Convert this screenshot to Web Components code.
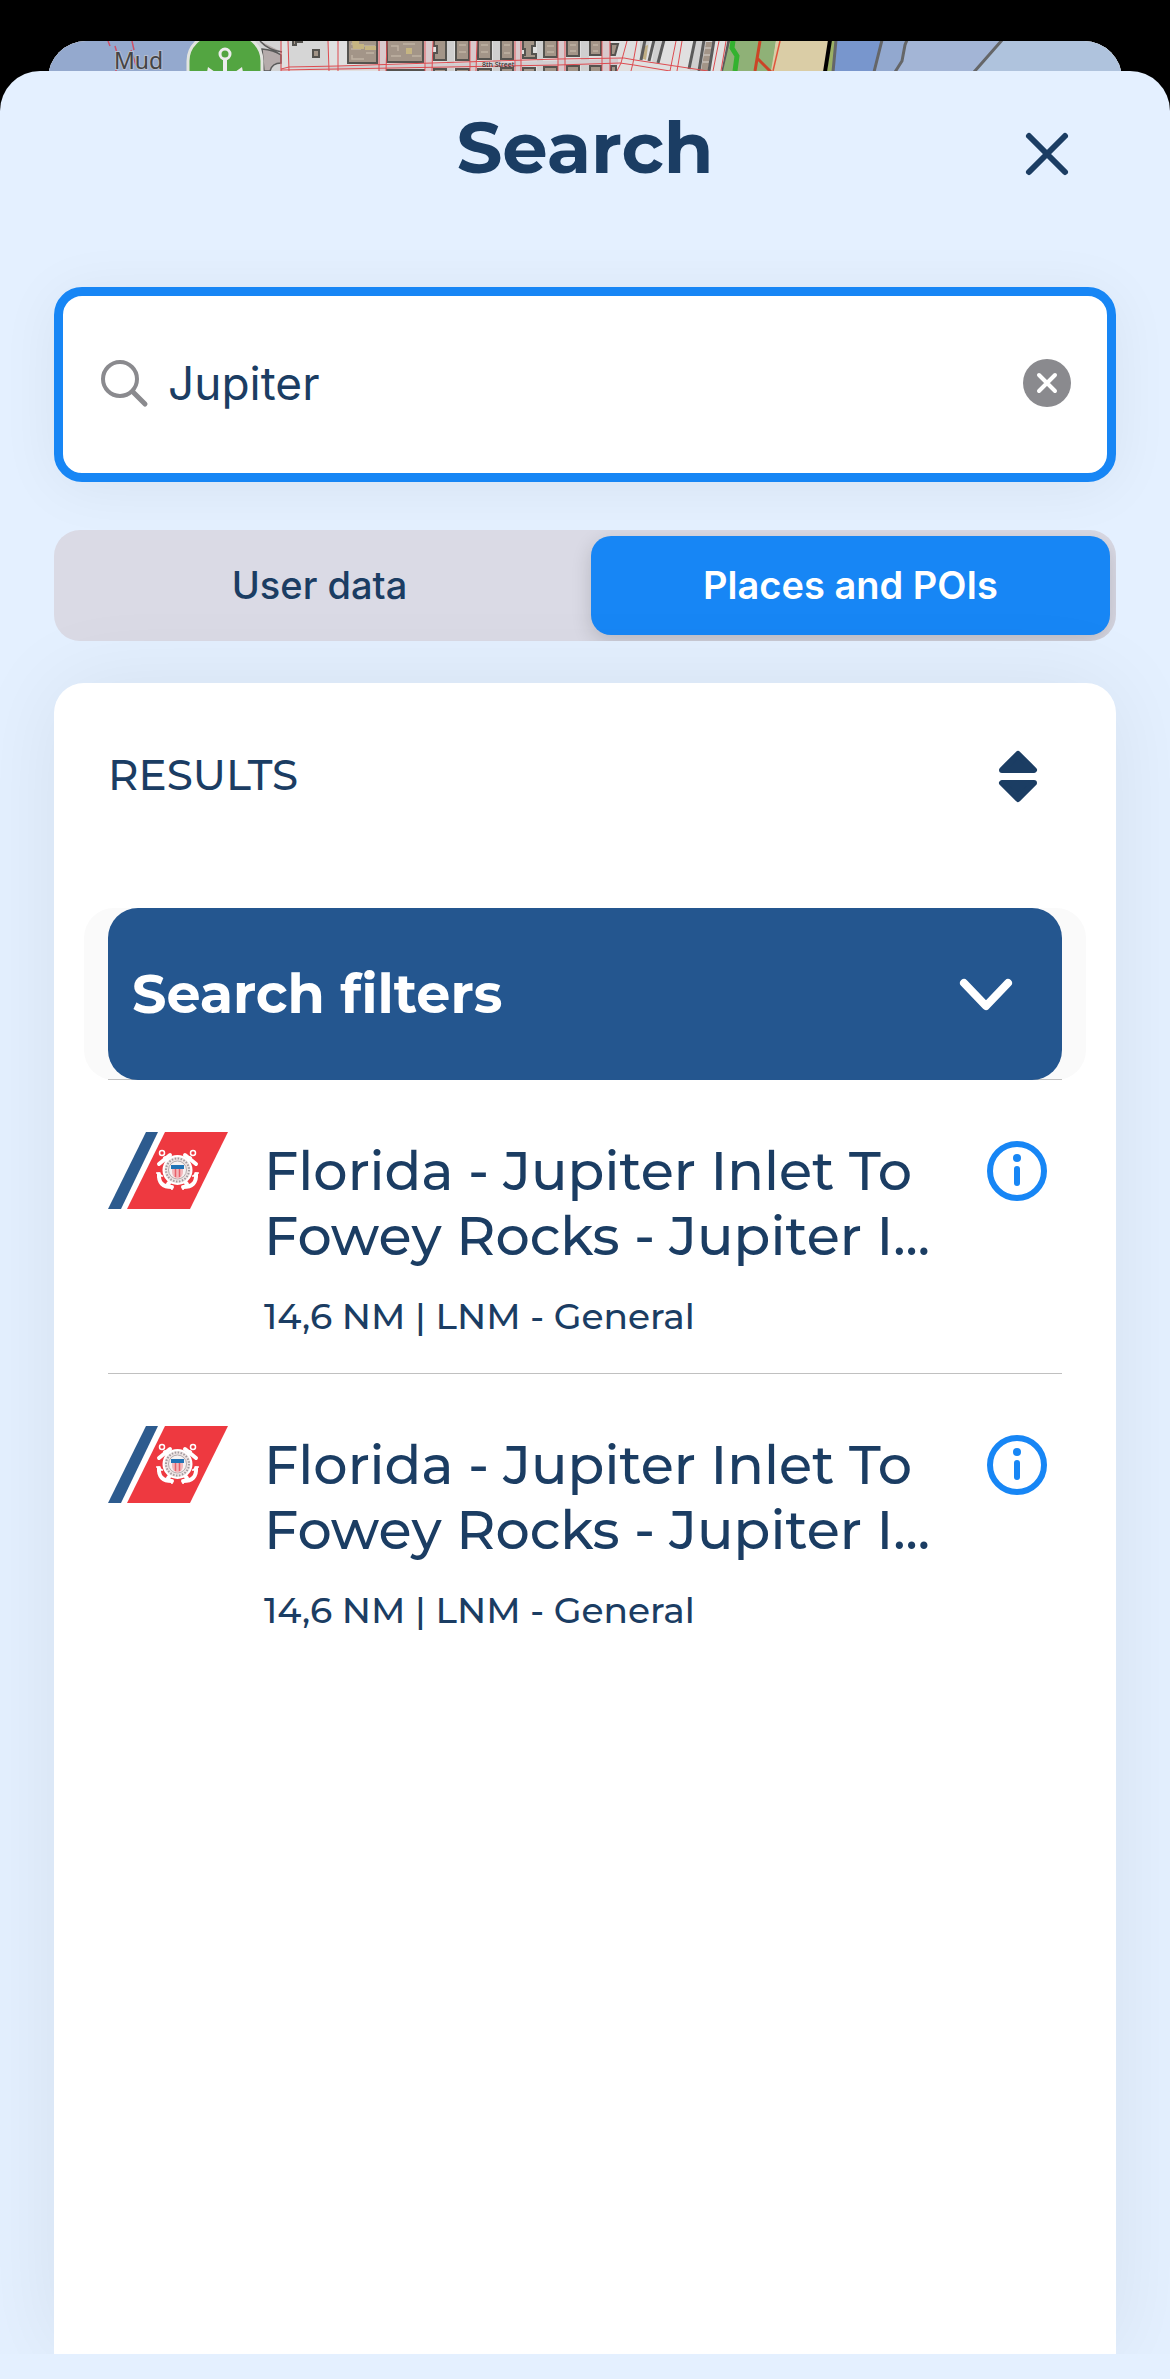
<!DOCTYPE html>
<html lang="en">
<head>
<meta charset="utf-8">
<meta name="viewport" content="width=device-width, initial-scale=1">
<title>Search</title>
<style>
    body {
        margin: 0;
        background: #000;
        color: #1b3d63;
        font-family: Montserrat, Inter, "Liberation Sans", sans-serif;
    }
</style>
</head>
<body>
<search-page>
    <map-peek></map-peek>
    <modal-sheet heading="Search">
        <search-field value="Jupiter"></search-field>
        <segmented-control>
            <segment-button>User data</segment-button>
            <segment-button selected>Places and POIs</segment-button>
        </segmented-control>
        <results-card heading="RESULTS">
            <filter-bar>Search filters</filter-bar>
            <result-item>
                Florida - Jupiter Inlet To Fowey Rocks - Jupiter I...
                <span slot="meta">14,6 NM | LNM - General</span>
            </result-item>
            <result-item>
                Florida - Jupiter Inlet To Fowey Rocks - Jupiter I...
                <span slot="meta">14,6 NM | LNM - General</span>
            </result-item>
        </results-card>
    </modal-sheet>
</search-page>

<script>
const resetButton = `
    button {
        margin: 0;
        padding: 0;
        border: none;
        background: none;
        color: inherit;
        font: inherit;
        cursor: pointer;
    }
    svg {
        display: block;
    }
`;

class SearchPage extends HTMLElement {
    constructor() {
        super();
        this.attachShadow({ mode: 'open' });
        this.shadowRoot.innerHTML = `
            <style>
                :host {
                    display: flex;
                    flex-direction: column;
                    min-height: 100vh;
                }
            </style>
            <slot></slot>
        `;
    }
}

class MapPeek extends HTMLElement {
    constructor() {
        super();
        this.attachShadow({ mode: 'open' });
        /* the sheet slides over the lower 14px of the map */
        this.shadowRoot.innerHTML = `
            <style>
                :host {
                    display: block;
                    height: 44px;
                    margin: 41px 48px -14px;
                    border-radius: 38px 38px 0 0;
                    overflow: hidden;
                    background: #e0e0e0;
                }
                svg {
                    display: block;
                    width: 100%;
                    height: 44px;
                }
                .mud {
                    font: 23px "Noto Sans", sans-serif;
                    fill: #444;
                    stroke: #b4bdd0;
                    stroke-width: 2px;
                    paint-order: stroke;
                }
                .street {
                    font: 7px "Noto Sans", sans-serif;
                    fill: #222;
                }
            </style>
            <svg viewBox="0 0 1074 44" preserveAspectRatio="xMidYMin slice">
                <rect width="1074" height="44" fill="#e0e0e0"/>
                <rect width="160" height="44" fill="#94a9ce"/>
                <!-- shore by the marina -->
                <path d="M206 0H234V30H206Z" fill="#d3d3d4"/>
                <path d="M212 0Q220 9 234 11M214 8Q226 9 233 14V22Q224 22 222 30H216Z" fill="#b5abab" stroke="#5a5a5a" stroke-width="1.5"/>
                <path d="M240 0H280V26H240Z" fill="#d6d6d6"/>
                <!-- cross streets -->
                <path d="M331 0H338V30H331ZM378 0H384V30H378ZM423 0H428V30H423ZM468 0H473V30H468ZM511 0H517V30H511ZM555 0H562V30H555Z" fill="#d9c9cc"/>
                <path d="M399 0H406V30H399ZM445 0H453V30H445ZM489 0H495V30H489ZM533 0H541V30H533Z" fill="#cfcfcf"/>
                <path d="M235 27L570 18V24L290 29Z" fill="#d2cdd0"/>
                <!-- blocks -->
                <g fill="#a39588" stroke="#55534f" stroke-width="2">
                    <path d="M300-2H329V22H300Z"/><path d="M339-2H375V21H339Z"/>
                    <path d="M386-2H398V19H386V12H389V5H386Z"/><path d="M408-2H421V19H408Z"/>
                    <path d="M430-2H443V18H430Z"/><path d="M453-2H465V18H453Z"/>
                    <path d="M475-2H487V5H484V13H488V17H475V14H477V8H475Z"/><path d="M496-2H509V16H496Z"/>
                    <path d="M519-2H531V15H519Z"/><path d="M542-2H553V14H542Z"/><path d="M563 3H570L567 14H563Z"/>
                    <path d="M265 9H271V16H265Z"/><path d="M245-2V4H248V1H254V-2Z"/>
                    <path d="M339 32V29H376V32ZM386 32V28H398V32ZM408 32V28H421V32ZM430 32V28H443V32ZM453 32V27H465V32ZM475 32V27H487V32ZM496 32V26H509V32ZM519 32V25H531V32ZM542 32V25H553V32ZM563 32V25H568V32Z"/>
                </g>
                <path d="M303 3H308V0M311 5H327M303 8H313M318 12H326M304 14V18H316M343 5H350V10M355 3H367M343 15H353M364 15H373M411 4H418M411 11H418M433 4H440M433 11H440M456 4H462M456 12H462M499 5H506M499 11H506M522 4H528M522 10H528M545 4H550M545 10H550" fill="none" stroke="#c0b2a2" stroke-width="1.5"/>
                <path d="M304 0H311V3H316V8H305ZM317 5H328V9H317ZM358 7H364V13H358Z" fill="#c6b582"/>
                <!-- diagonal blocks east of the grid -->
                <path d="M573 0H590L585 22L570 18Z" fill="#dedede"/>
                <path d="M592 0H602L598 18H592ZM607 0H614L610 22H604Z" fill="#cfcfcf"/>
                <path d="M594 6L600 4L598 19L593 17Z" fill="#bfae84"/>
                <path d="M648 0H655L651 30H642ZM657 0H666L662 30H653Z" fill="#d0d0d0"/>
                <path d="M658 1H664L660 30H653Z" fill="#a39588"/>
                <path d="M657 7H663M656 14H662M655 21H661" stroke="#c8c0b8" stroke-width="1.5"/>
                <path d="M597-1L593 19M606-1L601 20M616-1L610 22M647-1L641 28M656-1L651 30M666-1L661 30M681-1L675 30" fill="none" stroke="#5a5a5a" stroke-width="3"/>
                <!-- red road casings -->
                <g fill="none" stroke="#dd4b50" stroke-width="1">
                    <path d="M233 0V30M240 0L241 30M280 0L281 30M290 0V30M331 0V30M339 0L338 30M377 0V30M385 0L384 30M422 0V30M429 0L428 30M467 0V30M473 0V30M510 0V30M517 0V30M554 0V30M562 0V30"/>
                    <path d="M233 28L241 26L290 25L510 18L576 17L587 19L660 30M233 29L290 28L510 24L572 22L586 24L622 30"/>
                    <path d="M579 0L573 22L569 30M589 0L585 22L583 30M628 0L622 30M634 0L629 30M671 0L665 30M678 0L673 30"/>
                </g>
                <path d="M60 0L62 5M67 5L71 19M84 0L86 9M68 29V30M83 9L88 24" stroke="#cf5268" stroke-width="1.5"/>
                <!-- park, beach and water -->
                <path d="M682 0H728L724 30H675Z" fill="#8fb177"/>
                <path d="M685 0L684 7L689 15L687 30" fill="none" stroke="#33b22e" stroke-width="5"/>
                <path d="M728 0H781L777 30H723Z" fill="#dacda6"/>
                <path d="M712 0L707 30M709 17L723 31" fill="none" stroke="#cb4527" stroke-width="3"/>
                <path d="M732 0L725 30" stroke="#e0553c" stroke-width="1.5"/>
                <path d="M783 0H788L785 30H779Z" fill="#9bb065"/>
                <path d="M788 0H834L827 30H785Z" fill="#7896cd"/>
                <path d="M834 0H858L853 20L847 30H827Z" fill="#92a8cf"/>
                <path d="M858 0H954L927 30H847L853 20Z" fill="#a3b5d6"/>
                <path d="M954 0H1074V44H927V30Z" fill="#afc3dd"/>
                <path d="M788-1L785 31M834-1L826 31M859-1L857 4L854 20L847 31M955-2L926 31" fill="none" stroke="#656668" stroke-width="3"/>
                <path d="M782-1L777 31" stroke="#000" stroke-width="4"/>
                <text class="mud" x="66" y="28">Mud</text>
                <text class="street" x="434" y="26">8th Street</text>
                <!-- marina pin -->
                <rect x="140" y="-6" width="74" height="80" rx="26" fill="#53a541" stroke="#e2e4df" stroke-width="3"/>
                <circle cx="177" cy="13" r="5" fill="none" stroke="#ececec" stroke-width="3"/>
                <path d="M177 18V30" stroke="#ececec" stroke-width="4"/>
                <path d="M160 26L167 31H159ZM194 26L187 31H195Z" fill="#ececec"/>
            </svg>
        `;
    }
}

class ModalSheet extends HTMLElement {
    constructor() {
        super();
        this.attachShadow({ mode: 'open' });
        this.shadowRoot.innerHTML = `
            <style>
                ${resetButton}
                :host {
                    display: flex;
                    position: relative;
                    flex: 1;
                    flex-direction: column;
                    box-sizing: border-box;
                    padding-bottom: 25px;
                    border-radius: 40px 40px 0 0;
                    background: #e4f0ff;
                }
                header {
                    display: grid;
                    grid-template-columns: 1fr auto 1fr;
                    align-items: center;
                    padding: 32px 96px 0;
                }
                h1 {
                    grid-column: 2;
                    margin: 0;
                    font-size: 72px;
                    line-height: 88px;
                    font-weight: 700;
                }
                button {
                    justify-self: end;
                    padding-top: 16px;
                }
                .content {
                    display: flex;
                    flex: 1;
                    flex-direction: column;
                    padding: 96px 54px 0;
                    overflow: hidden;
                }
            </style>
            <header>
                <h1></h1>
                <button type="button" aria-label="Close">
                    <svg width="54" height="54" viewBox="0 0 54 54" fill="none" stroke="#1b3d63" stroke-width="6" stroke-linecap="round"><path d="M9 8L45 44M45 8L9 44"/></svg>
                </button>
            </header>
            <div class="content"><slot></slot></div>
        `;
    }

    connectedCallback() {
        this.shadowRoot.querySelector('h1').textContent = this.getAttribute('heading');
    }
}

class SearchField extends HTMLElement {
    constructor() {
        super();
        this.attachShadow({ mode: 'open' });
        this.shadowRoot.innerHTML = `
            <style>
                ${resetButton}
                :host {
                    display: block;
                    margin-bottom: 48px;
                }
                .field {
                    display: flex;
                    align-items: center;
                    gap: 18px;
                    box-sizing: border-box;
                    height: 195px;
                    padding: 0 36px 4px;
                    border: 9px solid #1786f5;
                    border-radius: 28px;
                    background: #fff;
                    box-shadow: 0 6px 60px rgba(0, 0, 0, 0.06);
                }
                label, button {
                    flex: none;
                }
                input {
                    flex: 1;
                    min-width: 0;
                    padding: 0;
                    border: none;
                    outline: none;
                    background: none;
                    color: inherit;
                    font: 46px/60px Inter, "Liberation Sans", sans-serif;
                }
            </style>
            <div class="field">
                <label for="query" aria-label="Search">
                    <svg width="51" height="51" viewBox="0 0 51 51" fill="none" stroke="#8a8a8e" stroke-linecap="round"><circle cx="21" cy="22" r="17" stroke-width="4"/><path d="M34 35L46 47" stroke-width="5"/></svg>
                </label>
                <input type="text" id="query">
                <button type="button" aria-label="Clear">
                    <svg width="48" height="48" viewBox="0 0 48 48"><circle cx="24" cy="24" r="24" fill="#8a8a8e"/><path d="M16 16L32 32M32 16L16 32" stroke="#fff" stroke-width="4" stroke-linecap="round"/></svg>
                </button>
            </div>
        `;
    }

    connectedCallback() {
        const input = this.shadowRoot.querySelector('input');
        input.value = this.getAttribute('value') || '';
        this.shadowRoot.querySelector('button').addEventListener('click', () => {
            input.value = '';
            input.focus();
        });
    }
}

class SegmentedControl extends HTMLElement {
    constructor() {
        super();
        this.attachShadow({ mode: 'open' });
        this.shadowRoot.innerHTML = `
            <style>
                :host {
                    display: grid;
                    grid-template-columns: 1fr 1fr;
                    gap: 12px;
                    margin-bottom: 42px;
                    padding: 6px;
                    border-radius: 26px;
                    background: #dadae5;
                    overflow: hidden;
                }
            </style>
            <slot></slot>
        `;
    }

    connectedCallback() {
        this.addEventListener('click', (event) => {
            const segment = event.target.closest('segment-button');
            if (!segment) return;
            this.querySelectorAll('segment-button').forEach((item) => {
                item.toggleAttribute('selected', item === segment);
            });
        });
    }
}

class SegmentButton extends HTMLElement {
    static get observedAttributes() {
        return ['selected'];
    }

    constructor() {
        super();
        this.attachShadow({ mode: 'open' });
        this.shadowRoot.innerHTML = `
            <style>
                ${resetButton}
                :host {
                    display: block;
                    border-radius: 20px;
                    font: 500 38px/48px Inter, "Liberation Sans", sans-serif;
                }
                :host([selected]) {
                    background: #1786f5;
                    color: #fff;
                    font-weight: 600;
                    box-shadow: 0 6px 20px rgba(0, 0, 0, 0.16);
                }
                button {
                    width: 100%;
                    height: 99px;
                    padding-bottom: 2px;
                }
            </style>
            <button type="button" aria-pressed="false"><slot></slot></button>
        `;
    }

    attributeChangedCallback() {
        this.shadowRoot.querySelector('button').setAttribute('aria-pressed', this.hasAttribute('selected'));
    }
}

class ResultsCard extends HTMLElement {
    constructor() {
        super();
        this.attachShadow({ mode: 'open' });
        this.shadowRoot.innerHTML = `
            <style>
                ${resetButton}
                :host {
                    display: block;
                    flex: 1;
                    padding: 0 54px;
                    border-radius: 30px 30px 0 0;
                    background: #fff;
                    box-shadow: 0 0 90px rgba(0, 0, 0, 0.07);
                }
                header {
                    display: flex;
                    align-items: center;
                    justify-content: space-between;
                    padding: 58px 18px 98px 0;
                }
                h2 {
                    margin: 0;
                    font-size: 42px;
                    line-height: 69px;
                    font-weight: 500;
                }
            </style>
            <header>
                <h2></h2>
                <button type="button" aria-label="Sort">
                    <svg width="52" height="54" viewBox="0 0 52 54" fill="#1b3d63" stroke="#1b3d63" stroke-width="6" stroke-linejoin="round"><path d="M26 5L42 21H10ZM10 34H42L26 50Z"/></svg>
                </button>
            </header>
            <slot></slot>
        `;
    }

    connectedCallback() {
        this.shadowRoot.querySelector('h2').textContent = this.getAttribute('heading');
    }
}

class FilterBar extends HTMLElement {
    constructor() {
        super();
        this.attachShadow({ mode: 'open' });
        this.shadowRoot.innerHTML = `
            <style>
                ${resetButton}
                :host {
                    display: block;
                    margin: 0 -24px;
                    padding: 0 24px;
                    border-radius: 30px;
                    background: #fafafa;
                }
                .line {
                    background: linear-gradient(#c0c0c0, #c0c0c0) bottom / 100% 1px no-repeat;
                }
                button {
                    display: flex;
                    align-items: center;
                    justify-content: space-between;
                    box-sizing: border-box;
                    width: 100%;
                    height: 172px;
                    padding: 0 48px 0 24px;
                    border-radius: 30px;
                    background: #24568f;
                    color: #fff;
                    font-size: 54px;
                    line-height: 66px;
                    font-weight: 700;
                }
            </style>
            <div class="line">
                <button type="button" aria-expanded="false">
                    <slot></slot>
                    <svg width="56" height="34" viewBox="0 0 56 34" fill="none" stroke="#fff" stroke-width="8" stroke-linecap="round" stroke-linejoin="round"><path d="M6 6L28 29L50 6"/></svg>
                </button>
            </div>
        `;
    }
}

class ResultItem extends HTMLElement {
    constructor() {
        super();
        this.attachShadow({ mode: 'open' });
        this.shadowRoot.innerHTML = `
            <style>
                ${resetButton}
                :host {
                    display: flex;
                    align-items: flex-start;
                    padding: 51px 0 27px;
                    border-bottom: 1px solid #c0c0c0;
                }
                :host(:last-of-type) {
                    border-bottom: none;
                }
                .flag, button {
                    flex: none;
                }
                .text {
                    flex: 1;
                    min-width: 0;
                    padding: 8px 36px 0;
                }
                h3 {
                    margin: 0;
                    font-size: 54px;
                    line-height: 65px;
                    font-weight: 500;
                }
                p {
                    margin: 17px 0 0;
                    font-size: 36px;
                    line-height: 60px;
                    font-weight: 500;
                }
                button {
                    padding: 10px 15px 0 0;
                }
            </style>
            <svg class="flag" width="120" height="78" viewBox="0 0 120 78" role="img" aria-label="Coast Guard">
                <path d="M38 1H50L13 78H0Z" fill="#2d5b8e"/>
                <path d="M57 1H120L82 78H19Z" fill="#ee3940"/>
                <g fill="none" stroke="#fff" stroke-linecap="round">
                    <path d="M57 27L79 53M82 27L60 53" stroke-width="4"/>
                    <path d="M51 33L62 24M77 24L88 33" stroke-width="4"/>
                    <circle cx="54" cy="22" r="2.500" stroke-width="1.500"/>
                    <circle cx="85" cy="22" r="2.500" stroke-width="1.500"/>
                    <path d="M51 43Q50 56 64 56M88 43Q89 56 75 56" stroke-width="4"/>
                    <path d="M49 42L54 45M90 42L85 45M61 53L64 58M78 53L75 58" stroke-width="2"/>
                </g>
                <circle cx="69.500" cy="39" r="14" fill="#eee4e4" stroke="#fff" stroke-width="2"/>
                <circle cx="69.500" cy="39" r="11.500" fill="none" stroke="#a39a9d" stroke-width="2" stroke-dasharray="1.500 1.500"/>
                <circle cx="69.500" cy="39" r="9" fill="#f7f2f2" stroke="#b5abad" stroke-width="1"/>
                <path d="M64 37H75V41Q75 46 69.500 48Q64 46 64 41Z" fill="#f3b8bc"/>
                <path d="M67.500 38V46M71.500 38V46" stroke="#e8606a" stroke-width="1.500"/>
                <path d="M63 34H76V38H63Z" fill="#2273b5"/>
            </svg>
            <div class="text">
                <h3><slot></slot></h3>
                <p><slot name="meta"></slot></p>
            </div>
            <button type="button" aria-label="Info">
                <svg width="60" height="60" viewBox="0 0 60 60"><circle cx="30" cy="30" r="27" fill="none" stroke="#1786f5" stroke-width="6"/><circle cx="30" cy="17" r="4" fill="#1786f5"/><path d="M30 28V42" stroke="#1786f5" stroke-width="6" stroke-linecap="round"/></svg>
            </button>
        `;
    }
}

customElements.define('search-page', SearchPage);
customElements.define('map-peek', MapPeek);
customElements.define('modal-sheet', ModalSheet);
customElements.define('search-field', SearchField);
customElements.define('segmented-control', SegmentedControl);
customElements.define('segment-button', SegmentButton);
customElements.define('results-card', ResultsCard);
customElements.define('filter-bar', FilterBar);
customElements.define('result-item', ResultItem);
</script>
</body>
</html>
